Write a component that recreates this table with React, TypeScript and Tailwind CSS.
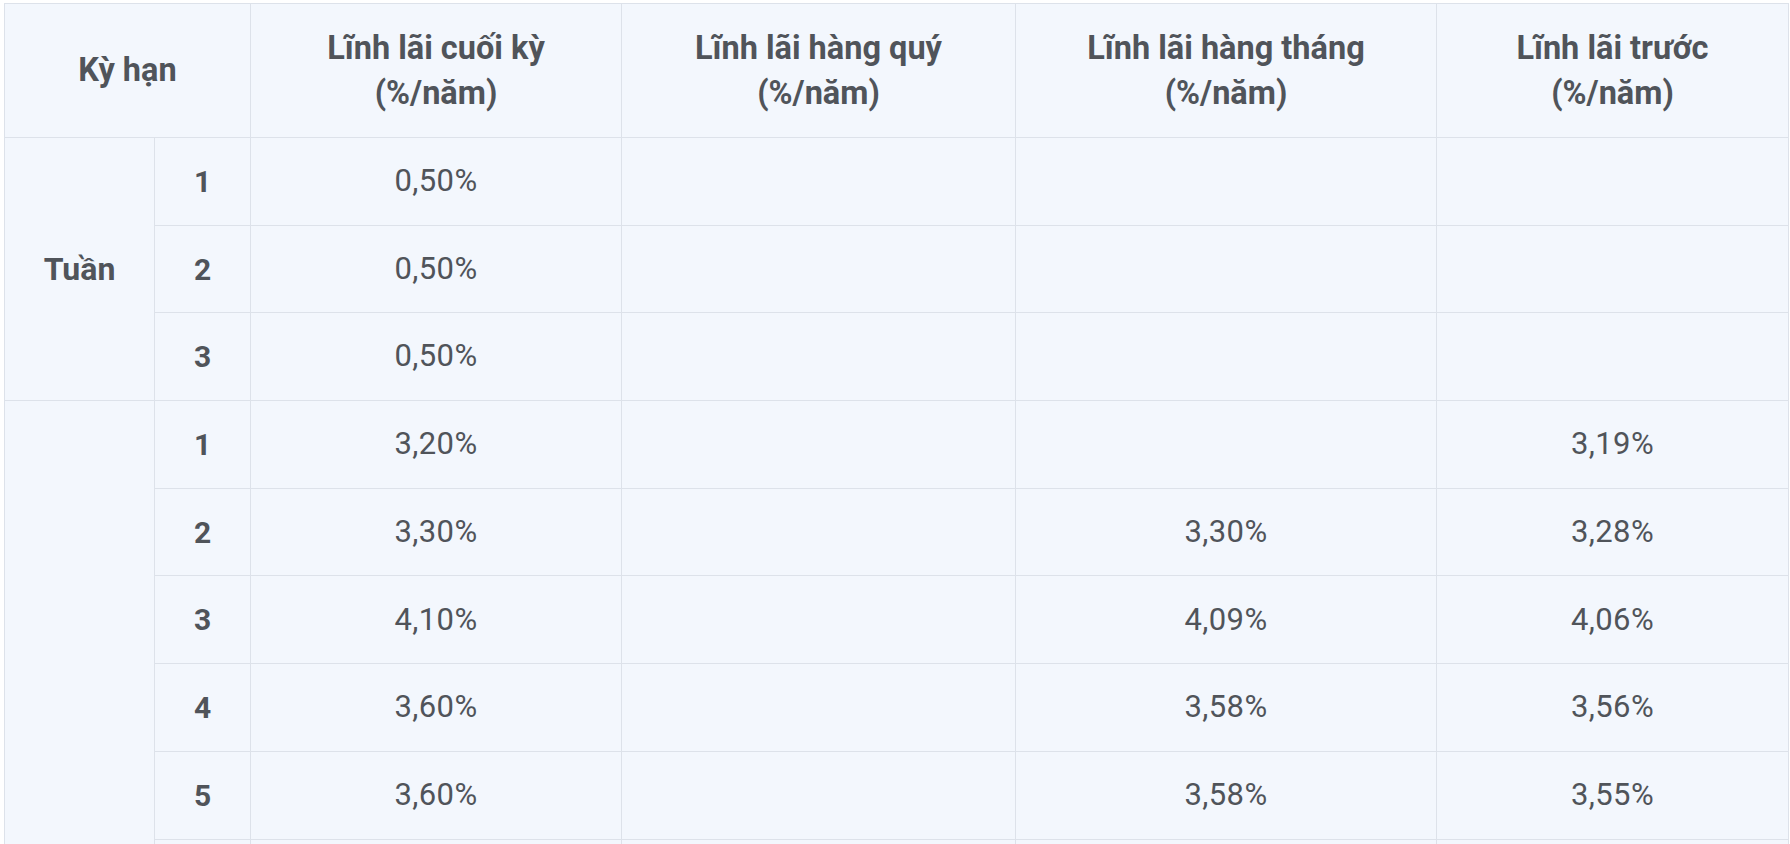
import React from "react";

const weeks = [
  { n: "1", a: "0,50%", b: "", c: "", d: "" },
  { n: "2", a: "0,50%", b: "", c: "", d: "" },
  { n: "3", a: "0,50%", b: "", c: "", d: "" },
];

const months = [
  { n: "1", a: "3,20%", b: "", c: "", d: "3,19%" },
  { n: "2", a: "3,30%", b: "", c: "3,30%", d: "3,28%" },
  { n: "3", a: "4,10%", b: "", c: "4,09%", d: "4,06%" },
  { n: "4", a: "3,60%", b: "", c: "3,58%", d: "3,56%" },
  { n: "5", a: "3,60%", b: "", c: "3,58%", d: "3,55%" },
  { n: "6", a: "", b: "", c: "", d: "" },
  { n: "7", a: "", b: "", c: "", d: "" },
  { n: "8", a: "", b: "", c: "", d: "" },
  { n: "9", a: "", b: "", c: "", d: "" },
  { n: "10", a: "", b: "", c: "", d: "" },
  { n: "11", a: "", b: "", c: "", d: "" },
  { n: "12", a: "", b: "", c: "", d: "" },
];

const cell = "border border-[#dde2ea] text-center align-middle p-0";
const th = cell + " font-bold text-[32.5px] leading-[45px]";
const val = cell + " font-normal text-[31px] tracking-[0.4px] h-[87.7px]";
const num = cell + " font-bold text-[30px] h-[87.7px]";

function Rows({ label, data }: { label: string; data: typeof weeks }) {
  return (
    <>
      {data.map((r, i) => (
        <tr key={i}>
          {i === 0 && (
            <td rowSpan={data.length} className={cell + " font-bold text-[32px]"}>
              {label}
            </td>
          )}
          <td className={num}>{r.n}</td>
          <td className={val}>{r.a}</td>
          <td className={val}>{r.b}</td>
          <td className={val}>{r.c}</td>
          <td className={val}>{r.d}</td>
        </tr>
      ))}
    </>
  );
}

export default function App() {
  return (
    <div
      className="bg-white pt-[3px] pl-[4px] pr-[2px] min-h-screen"
      style={{ fontFamily: "Roboto, 'Noto Sans', sans-serif" }}
    >
      <table className="w-[1784px] table-fixed border-collapse bg-[#f3f7fd] text-[#50545a]">
        <colgroup>
          <col className="w-[150px]" />
          <col className="w-[96px]" />
          <col className="w-[371px]" />
          <col className="w-[394px]" />
          <col className="w-[421px]" />
          <col className="w-[352px]" />
        </colgroup>
        <thead>
          <tr className="h-[134px]">
            <th colSpan={2} className={th}>
              Kỳ hạn
            </th>
            <th className={th}>
              Lĩnh lãi cuối kỳ
              <br />
              (%/năm)
            </th>
            <th className={th}>
              Lĩnh lãi hàng quý
              <br />
              (%/năm)
            </th>
            <th className={th}>
              Lĩnh lãi hàng tháng
              <br />
              (%/năm)
            </th>
            <th className={th}>
              Lĩnh lãi trước
              <br />
              (%/năm)
            </th>
          </tr>
        </thead>
        <tbody>
          <Rows label="Tuần" data={weeks} />
          <Rows label="Tháng" data={months} />
        </tbody>
      </table>
    </div>
  );
}
